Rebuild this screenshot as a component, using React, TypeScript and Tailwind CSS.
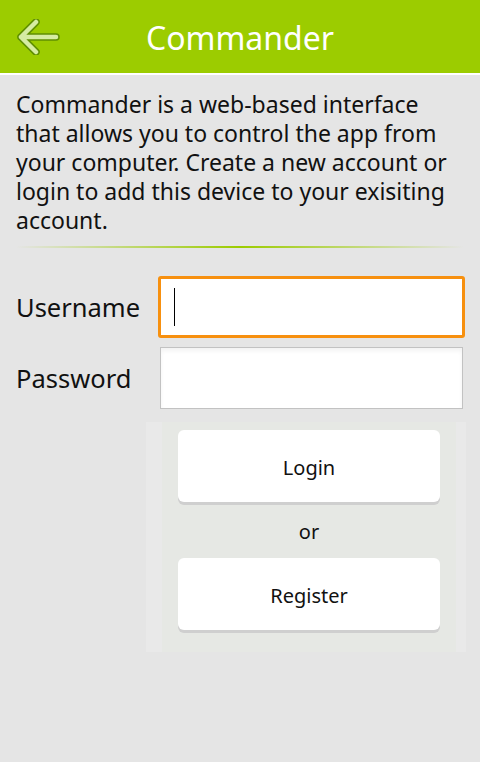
import React from "react";

function BackArrow() {
  return (
    <svg width="44" height="36" viewBox="0 0 44 36" className="block">
      <path
        d="M20 3 L5 18 L20 33 M5 18 L40 18"
        fill="none"
        stroke="#5f8f00"
        strokeWidth="7.5"
        strokeLinecap="round"
        strokeLinejoin="round"
      />
      <path
        d="M20 3 L5 18 L20 33 M5 18 L40 18"
        fill="none"
        stroke="#d6eca2"
        strokeWidth="4.5"
        strokeLinecap="round"
        strokeLinejoin="round"
      />
    </svg>
  );
}

export default function App() {
  return (
    <div
      className="w-[480px] h-[762px] bg-[#e5e5e5] text-black overflow-hidden"
      style={{ fontFamily: '"Noto Sans", "Open Sans", sans-serif' }}
    >
      {/* Header */}
      <header className="relative h-[75px] bg-[#9ccc00] border-b-2 border-white flex items-center justify-center">
        <div className="absolute left-[16px] top-[19px]">
          <BackArrow />
        </div>
        <h1 className="text-[32px] leading-none text-white pt-[3px]">Commander</h1>
      </header>

      {/* Intro */}
      <p className="px-[16px] pt-[15px] text-[23px] leading-[29px] text-[#111]">
        Commander is a web-based interface that allows you to control the app from your
        computer. Create a new account or login to add this device to your exisiting
        account.
      </p>

      <div className="mx-[16px] mt-[11px] h-[2px] bg-gradient-to-r from-transparent via-[#9ccc00] to-transparent" />

      {/* Form */}
      <div className="mt-[28px] flex flex-col gap-[9px] pr-[15px]">
        <div className="flex items-center">
          <label className="w-[158px] shrink-0 pl-[16px] text-[25.5px] text-[#111]">Username</label>
          <div className="flex-1 h-[62px] bg-white rounded-[3px] border-[3px] border-[#f7900f] flex items-center pl-[13px]">
            <div className="w-px h-[38px] bg-black" />
          </div>
        </div>
        <div className="flex items-center">
          <label className="w-[160px] shrink-0 pl-[16px] text-[25.5px] text-[#111]">Password</label>
          <div className="flex-1 h-[62px] mr-[2px] bg-white border border-[#c2c2c2] shadow-[inset_0_3px_4px_rgba(0,0,0,0.05)]" />
        </div>
      </div>

      {/* Buttons panel */}
      <div className="ml-[146px] mr-[14px] mt-[13px] bg-[#e9e9e9] pl-[16px] pr-[10px]">
        <div className="bg-[#e6e8e4] flex flex-col items-center pt-[8px] pb-[22px]">
          <button className="w-[262px] h-[72px] bg-white rounded-[6px] shadow-[0_3px_0_#cfcfcf] text-[20px] text-[#111] pt-[3px]">
            Login
          </button>
          <div className="h-[56px] flex items-center text-[20px] text-[#111] pt-[3px]">or</div>
          <button className="w-[262px] h-[72px] bg-white rounded-[6px] shadow-[0_3px_0_#cfcfcf] text-[20px] text-[#111] pt-[3px]">
            Register
          </button>
        </div>
      </div>
    </div>
  );
}
